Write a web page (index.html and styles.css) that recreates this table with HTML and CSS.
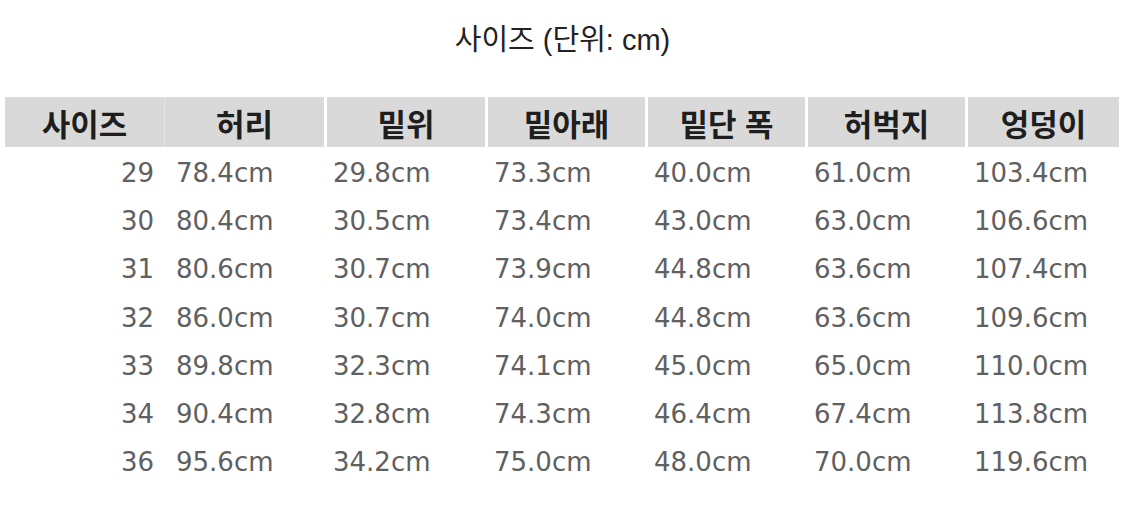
FILE: index.html
```html
<!DOCTYPE html>
<html lang="ko">
<head>
<meta charset="utf-8">
<link rel="stylesheet" href="styles.css">
</head>
<body>
<div class="page">
  <h1 class="title">사이즈 (단위: cm)</h1>
  <div class="table">
    <div class="hd first">사이즈</div>
    <div class="hd joined">허리</div>
    <div class="hd">밑위</div>
    <div class="hd">밑아래</div>
    <div class="hd">밑단 폭</div>
    <div class="hd">허벅지</div>
    <div class="hd">엉덩이</div>

    <div class="size">29</div><div class="val v2">78.4cm</div><div class="val">29.8cm</div><div class="val">73.3cm</div><div class="val">40.0cm</div><div class="val">61.0cm</div><div class="val">103.4cm</div>
    <div class="size">30</div><div class="val v2">80.4cm</div><div class="val">30.5cm</div><div class="val">73.4cm</div><div class="val">43.0cm</div><div class="val">63.0cm</div><div class="val">106.6cm</div>
    <div class="size">31</div><div class="val v2">80.6cm</div><div class="val">30.7cm</div><div class="val">73.9cm</div><div class="val">44.8cm</div><div class="val">63.6cm</div><div class="val">107.4cm</div>
    <div class="size">32</div><div class="val v2">86.0cm</div><div class="val">30.7cm</div><div class="val">74.0cm</div><div class="val">44.8cm</div><div class="val">63.6cm</div><div class="val">109.6cm</div>
    <div class="size">33</div><div class="val v2">89.8cm</div><div class="val">32.3cm</div><div class="val">74.1cm</div><div class="val">45.0cm</div><div class="val">65.0cm</div><div class="val">110.0cm</div>
    <div class="size">34</div><div class="val v2">90.4cm</div><div class="val">32.8cm</div><div class="val">74.3cm</div><div class="val">46.4cm</div><div class="val">67.4cm</div><div class="val">113.8cm</div>
    <div class="size">36</div><div class="val v2">95.6cm</div><div class="val">34.2cm</div><div class="val">75.0cm</div><div class="val">48.0cm</div><div class="val">70.0cm</div><div class="val">119.6cm</div>
  </div>
</div>
</body>
</html>
```

FILE: styles.css
```css
html, body {
  margin: 0;
  padding: 0;
  background: #ffffff;
}

.page {
  width: 1125px;
  height: 506px;
  overflow: hidden;
}

.title {
  margin: 0;
  height: 97px;
  box-sizing: border-box;
  padding-top: 20px;
  text-align: center;
  font-family: "Liberation Sans", "Noto Sans CJK KR", sans-serif;
  font-size: 29px;
  font-weight: normal;
  line-height: 40px;
  color: #222222;
}

.table {
  margin-left: 5px;
  width: 1114px;
  display: grid;
  grid-template-columns: 159px 160px 161px 160px 160px 160px 154px;
  grid-template-rows: 50px repeat(7, 48.3px);
}

.hd {
  background: #d9d9d9;
  display: flex;
  align-items: center;
  justify-content: center;
  font-family: "Noto Sans CJK KR", "Liberation Sans", sans-serif;
  font-weight: bold;
  font-size: 31px;
  line-height: 1;
  color: #1e1e1e;
  border-left: 3px solid #ffffff;
}

.hd.first {
  border-left: none;
}

.hd.joined {
  border-left: 1px solid #e4e4e4;
}

.size,
.val {
  display: flex;
  align-items: center;
  padding-top: 3px;
  font-family: "DejaVu Sans", "Verdana", sans-serif;
  font-size: 26px;
  color: #606060;
}

.size {
  justify-content: flex-end;
  padding-right: 10px;
}

.val {
  padding-left: 9px;
}

.val.v2 {
  padding-left: 12px;
}
```
